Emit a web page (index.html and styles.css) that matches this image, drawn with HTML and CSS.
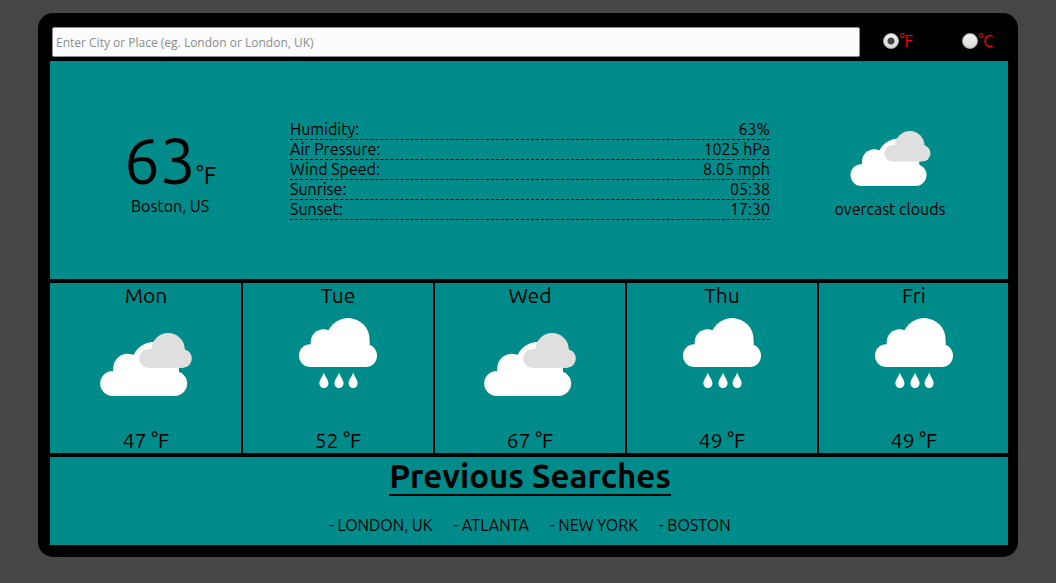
FILE: index.html
```html
<!DOCTYPE html>
<html lang="en">
<head>
<meta charset="utf-8">
<meta name="viewport" content="width=device-width, initial-scale=1">
<title>Weather</title>
<link rel="stylesheet" href="styles.css">
</head>
<body>
<svg class="sprite" aria-hidden="true">
  <symbol id="overcast" viewBox="0 0 275 189">
    <g fill="#fff">
      <rect x="0" y="114" width="261" height="75" rx="37.5"/>
      <circle cx="82" cy="105" r="42.5"/>
      <circle cx="164" cy="98" r="72"/>
      <rect x="39.500" y="104" width="197" height="50"/>
    </g>
    <g fill="#dfdfdf">
      <rect x="117" y="48" width="158" height="57" rx="28.5"/>
      <circle cx="204" cy="50" r="50"/>
    </g>
  </symbol>
  <symbol id="rain" viewBox="0 0 232 208">
    <g fill="#fff">
      <rect x="0" y="78" width="232" height="67.500" rx="33.5"/>
      <circle cx="73" cy="71" r="38"/>
      <circle cx="146" cy="64" r="64"/>
      <rect x="35" y="70" width="175" height="40"/>
      <path d="M74 162C77 174 87.500 183 87.500 195A13.500 13.500 0 0 1 60.500 195C60.500 183 71 174 74 162Z"/>
      <path d="M119 162C122 174 132.500 183 132.500 195A13.500 13.500 0 0 1 105.500 195C105.500 183 116 174 119 162Z"/>
      <path d="M161 162C164 174 174.500 183 174.500 195A13.500 13.500 0 0 1 147.500 195C147.500 183 158 174 161 162Z"/>
    </g>
  </symbol>
</svg>
<main class="card">
  <form class="search">
    <input class="search-box" type="text" aria-label="City or place" placeholder="Enter City or Place (eg. London or London, UK)">
    <div class="units">
      <label class="unit"><input class="unit-radio" type="radio" name="unit" checked>°F</label>
      <label class="unit"><input class="unit-radio" type="radio" name="unit">°C</label>
    </div>
  </form>
  <div class="panels">
    <section class="current">
      <div class="now">
        <div class="temp">63<span class="degree">°F</span></div>
        <div class="place">Boston, US</div>
      </div>
      <dl class="details">
        <div class="detail"><dt>Humidity:</dt><dd>63%</dd></div>
        <div class="detail"><dt>Air Pressure:</dt><dd>1025 hPa</dd></div>
        <div class="detail"><dt>Wind Speed:</dt><dd>8.05 mph</dd></div>
        <div class="detail"><dt>Sunrise:</dt><dd>05:38</dd></div>
        <div class="detail"><dt>Sunset:</dt><dd>17:30</dd></div>
      </dl>
      <div class="sky">
        <svg class="sky-icon" aria-hidden="true"><use href="#overcast"/></svg>
        <div>overcast clouds</div>
      </div>
    </section>
    <section class="forecast">
      <div class="day"><div>Mon</div><div class="day-sky"><svg class="cloudy-icon" aria-hidden="true"><use href="#overcast"/></svg></div><div>47 °F</div></div>
      <div class="day"><div>Tue</div><div class="day-sky"><svg class="rain-icon" aria-hidden="true"><use href="#rain"/></svg></div><div>52 °F</div></div>
      <div class="day"><div>Wed</div><div class="day-sky"><svg class="cloudy-icon" aria-hidden="true"><use href="#overcast"/></svg></div><div>67 °F</div></div>
      <div class="day"><div>Thu</div><div class="day-sky"><svg class="rain-icon" aria-hidden="true"><use href="#rain"/></svg></div><div>49 °F</div></div>
      <div class="day"><div>Fri</div><div class="day-sky"><svg class="rain-icon" aria-hidden="true"><use href="#rain"/></svg></div><div>49 °F</div></div>
    </section>
    <section class="previous">
      <h1 class="previous-title">Previous Searches</h1>
      <ul class="places">
        <li>- LONDON, UK</li>
        <li>- ATLANTA</li>
        <li>- NEW YORK</li>
        <li>- BOSTON</li>
      </ul>
    </section>
  </div>
</main>
</body>
</html>
```
FILE: styles.css
```css
* { box-sizing: border-box; }

body {
  margin: 0;
  padding: 13px 38px;
  background: #464646;
  color: #000;
  font: 16px/20px Ubuntu, "Noto Sans", sans-serif;
}

.sprite { position: absolute; width: 0; height: 0; }

.card {
  max-width: 980px;
  margin: 0 auto;
  padding: 0 10px 12px 12px;
  background: #000;
  border-radius: 15px;
}

.search {
  display: flex;
  align-items: center;
  padding: 14px 0 4px 2px;
}

.search-box {
  flex: 1;
  min-width: 0;
  height: 30px;
  padding: 0 3px;
  border: 1px solid #8b8e8f;
  border-radius: 2px;
  background: #fcfcfc;
  color: #222;
  font: 12px/20px "Open Sans", "Noto Sans", sans-serif;
}

.search-box::placeholder { color: #8c8c8c; opacity: 1; }

.units {
  display: flex;
  gap: 49px;
  padding: 0 15px 2px 23px;
}

.unit {
  display: flex;
  align-items: center;
  color: #f00;
}

.unit-radio {
  appearance: none;
  width: 16px;
  height: 16px;
  margin: 0;
  border: 1px solid #aaa;
  border-radius: 50%;
  background: linear-gradient(#f2f2f2, #d8d8d8);
}

.unit-radio:checked {
  background: radial-gradient(circle, #444 0 3px, transparent 4px), linear-gradient(#f2f2f2, #d8d8d8);
}

/* The last day's divider runs under the card's edge. */
.panels { overflow: hidden; }
.panels > section { margin-right: -2px; }

.current {
  display: grid;
  grid-template-columns: 1fr 2fr 1fr;
  align-items: center;
  min-height: 218px;
  background: #008b8b;
  text-align: center;
}

.now { padding-top: 4px; }
.temp { font-size: 64px; line-height: 64px; }
.degree { font-size: 24px; line-height: 24px; }
.place { margin-top: 4px; }

.details { margin: 0; }

.detail {
  display: flex;
  justify-content: space-between;
  border-bottom: 1px dashed #000;
  line-height: 19px;
}

.detail dd { margin: 0; }

.sky-icon {
  display: block;
  width: 81px;
  height: 55px;
  margin: 10px auto 13px;
}

.panels > .forecast {
  display: grid;
  grid-template-columns: repeat(5, 1fr);
  margin: 4px -3px 4px 0;
  padding-left: 1px;
  background: #008b8b;
  font-size: 21px;
  line-height: 25px;
  text-align: center;
}

.day { border-right: 2px solid #000; }

.day-sky { height: 120px; padding-top: 10px; }
.day-sky svg { display: block; margin: 0 auto; }
.day-sky .cloudy-icon { width: 92px; height: 63px; margin-top: 15px; }
.rain-icon { width: 78px; height: 70px; }

.previous {
  padding-bottom: 10px;
  background: #008b8b;
  text-align: center;
}

.previous-title {
  width: fit-content;
  margin: 0 auto 19px;
  border-bottom: 2px solid #000;
  font-size: 33px;
  line-height: 37px;
}

.places {
  display: flex;
  flex-wrap: wrap;
  justify-content: center;
  gap: 0 21px;
  margin: 0;
  padding: 0;
  list-style: none;
}
```
